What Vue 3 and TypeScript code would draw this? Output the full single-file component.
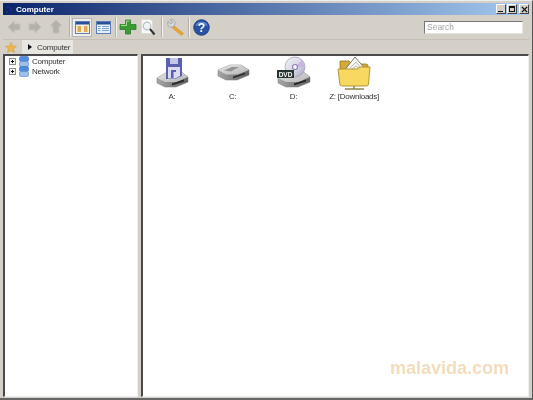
<template>
  <div class="window">
    <div class="titlebar">
      <svg class="title-icon" width="10" height="10" viewBox="0 0 10 10">
        <path d="M2 2h2v2H2zM5 5h2v2H5zM1 7h2v2H1z" fill="#1d2f7a" />
      </svg>
      <span class="title-text">Computer</span>
      <div class="caption-buttons">
        <button class="caption-btn"><span class="min-glyph"></span></button>
        <button class="caption-btn"><span class="max-glyph"></span></button>
        <button class="caption-btn close-btn">
          <svg width="7" height="7" viewBox="0 0 8 8">
            <path d="M1 1l6 6M7 1L1 7" stroke="#111" stroke-width="1.6" />
          </svg>
        </button>
      </div>
    </div>

    <div class="toolbar">
      <div class="tool-group">
        <div v-for="d in navArrows" :key="d" class="slot">
          <svg width="16" height="16" viewBox="0 0 16 16">
            <path :d="d" fill="#b3b1a9" stroke="#c2c0b8" stroke-width="1" />
          </svg>
        </div>
      </div>
      <div class="sep"></div>
      <div class="tool-group views">
        <div class="view-btn active">
          <svg width="15" height="13" viewBox="0 0 15 13">
            <rect x=".5" y=".5" width="14" height="12" fill="#f6f1df" stroke="#5d7fb8" />
            <rect x="1" y="1" width="13" height="2.500" fill="#274f9a" />
            <rect x="2.500" y="5" width="3.500" height="6" fill="#e2a94e" />
            <rect x="9" y="5" width="3.500" height="6" fill="#e2a94e" />
          </svg>
        </div>
        <div class="view-btn">
          <svg width="15" height="13" viewBox="0 0 15 13">
            <rect x=".5" y=".5" width="14" height="12" fill="#e6eff9" stroke="#5d7fb8" />
            <rect x="1" y="1" width="13" height="2.500" fill="#274f9a" />
            <path d="M2 5.500h2.500M2 7.500h2.500M2 9.500h2.500M6 5.500h7M6 7.500h7M6 9.500h7" stroke="#7ea0d2" />
          </svg>
        </div>
      </div>
      <div class="sep"></div>
      <div class="tool-group">
        <div class="slot slot-narrow">
          <svg width="18" height="16" viewBox="0 0 18 16">
            <path d="M6.500 1h5v4.500H17v5h-5.500V15h-5v-4.500H1v-5h5.500z" fill="#3b9a34" stroke="#27802a" stroke-width=".8" />
            <path d="M2 6.500h5.500V2h3" stroke="#a3e08e" fill="none" />
          </svg>
        </div>
        <div class="slot slot-narrow">
          <svg width="16" height="17" viewBox="0 0 16 17">
            <path d="M1.500.5h9l2 2v12h-11z" fill="#f8f8f6" stroke="#dcdcd6" />
            <circle cx="7" cy="7" r="3.800" fill="#f0f4f5" stroke="#b8bfc3" stroke-width="1.200" />
            <path d="M10 10l4.500 5.500" stroke="#2e2e2e" stroke-width="2" />
          </svg>
        </div>
      </div>
      <div class="sep"></div>
      <div class="tool-group">
        <div class="slot">
          <svg class="wrench" width="18" height="17" viewBox="0 0 18 17">
            <path d="M6.500 6.500l10 8-2 2-9.500-8z" fill="#efa52f" stroke="#c48a2a" stroke-width=".6" />
            <path d="M1 2.500l3 2.500 2-2L3 .8C5.500-.5 8.500 1 8 4.500c0 1-.5 2-1 3-1.500 1-4 1-5.500-.5C.5 5.500.5 4 1 2.500z" fill="#d5d7da" stroke="#8d9197" stroke-width=".6" />
          </svg>
        </div>
      </div>
      <div class="sep"></div>
      <div class="tool-group">
        <div class="slot slot-narrow">
          <svg width="17" height="17" viewBox="0 0 18 18">
            <circle cx="9" cy="9" r="8.200" fill="#2a52a3" stroke="#1d3b80" />
            <path d="M2.500 7.500a6.600 5.500 0 0 1 13 0c-4-1.500-9-1.500-13 0z" fill="#5f86cf" />
            <text x="9" y="13.500" text-anchor="middle" class="help-mark">?</text>
          </svg>
        </div>
      </div>
      <div class="search-box">Search</div>
    </div>

    <div class="tabbar">
      <div class="fav-tab">
        <svg width="12" height="11" viewBox="0 0 15 14">
          <path d="M7.500.5l2 4.500 5 .5-3.700 3.200 1.100 4.800-4.400-2.500-4.400 2.500 1.100-4.800L.5 5.500l5-.5z" fill="#eeb64c" stroke="#c99a3d" stroke-width=".6" />
        </svg>
      </div>
      <div class="path-tab">
        <span class="crumb-arrow"></span>
        <span>Computer</span>
      </div>
    </div>

    <div class="panes">
      <div class="tree pane">
        <div v-for="node in treeNodes" :key="node" class="tree-row">
          <svg class="expander" width="7" height="7" viewBox="0 0 7 7">
            <rect x=".5" y=".5" width="6" height="6" fill="#f3f3f0" stroke="#8d8d8d" />
            <path d="M2 3.500h3M3.500 2v3" stroke="#111" />
          </svg>
          <svg width="12" height="11" viewBox="0 0 12 11">
            <rect x="1.500" y="0.500" width="9" height="5" rx="1.500" fill="#4f8ce0" stroke="#3b6fbe" stroke-width=".6" />
            <rect x="1.500" y="5.500" width="9" height="5" rx="1.500" fill="#9dbfe9" stroke="#5f8bcc" stroke-width=".6" />
          </svg>
          <span class="tree-label">{{ node }}</span>
        </div>
      </div>
      <div class="files pane">
        <div class="file-item">
          <svg width="46" height="36" viewBox="0 0 46 36">
            <defs>
              <linearGradient id="driveTop" x1="0" y1="0" x2="1" y2="1">
                <stop offset="0" stop-color="#e6e6e6" />
                <stop offset="1" stop-color="#b4b4b4" />
              </linearGradient>
              <linearGradient id="driveFront" x1="0" y1="0" x2="1" y2="0">
                <stop offset="0" stop-color="#a6a6a6" />
                <stop offset="1" stop-color="#5f5f5f" />
              </linearGradient>
              <linearGradient id="disc" x1="0" y1="0" x2="1" y2="1">
                <stop offset="0" stop-color="#f4f4f8" />
                <stop offset=".6" stop-color="#d3d3e4" />
                <stop offset="1" stop-color="#9d9db4" />
              </linearGradient>
            </defs>
            <path d="M8 22L20 15H31L39 21V26L27 31H16L8 27Z" fill="url(#driveFront)" stroke="#777" stroke-width=".5" />
            <path d="M8 22L20 15H31L39 21L28 26H16Z" fill="url(#driveTop)" />
            <path d="M23 27.500L35 23.500V25.500L23 29.500Z" fill="#262626" />
            <path d="M17 2H33V20L26 23H17Z" fill="#5a5fae" />
            <rect x="21" y="2" width="8" height="6" fill="#c5c7e6" />
            <path d="M19 11H31V20L26 22.500H19Z" fill="#dcdcf0" />
            <path d="M22 14H27V16H24.500V22H22Z" fill="#5a5fae" />
          </svg>
          <span>A:</span>
        </div>
        <div class="file-item">
          <svg width="46" height="36" viewBox="0 0 46 36">
            <path d="M8 14L20 9H31L39 14V19L27 24H16L8 20Z" fill="url(#driveFront)" stroke="#777" stroke-width=".5" />
            <path d="M8 14L20 9H31L39 14L28 18.500H16Z" fill="url(#driveTop)" />
            <path d="M14 14.500L22 11H29L21 15.500Z" fill="#939393" />
            <path d="M23 20.500L35 16.500V18.500L23 22.500Z" fill="#333" />
          </svg>
          <span>C:</span>
        </div>
        <div class="file-item">
          <svg width="46" height="36" viewBox="0 0 46 36">
            <path d="M8 22L20 15H32L40 21V26L28 31H16L8 27Z" fill="url(#driveFront)" stroke="#777" stroke-width=".5" />
            <path d="M8 22L20 15H32L40 21L29 26H16Z" fill="url(#driveTop)" />
            <path d="M24 27.500L36 23.500V25.500L24 29.500Z" fill="#262626" />
            <circle cx="25" cy="11" r="10" fill="url(#disc)" stroke="#9e9eb3" stroke-width=".7" />
            <path d="M25 11L32 4A10 10 0 0 1 35 11Z" fill="#c7b6e0" />
            <circle cx="25" cy="11" r="2.500" fill="#f7f7f7" stroke="#8f82b8" stroke-width="1.200" />
            <rect x="7" y="14" width="17" height="8" fill="#27332d" />
            <text x="15.500" y="20.800" text-anchor="middle" class="dvd-mark">DVD</text>
          </svg>
          <span>D:</span>
        </div>
        <div class="file-item">
          <svg width="46" height="36" viewBox="0 0 46 36">
            <path d="M9 5h9l3 3h14q2 0 2 2v10H9z" fill="#d2aa35" stroke="#8f7a2a" stroke-width=".8" />
            <path d="M13 15L24 1l12 14v7H13z" fill="#f8f8f3" stroke="#6e6e68" stroke-width=".9" />
            <path d="M19 12l6-6 6 7M17 16l8-6 7 6" fill="none" stroke="#a8a8a0" stroke-width=".8" />
            <path d="M7 13h19l3-2h10l-1.500 17q-.2 2-2 2H11q-2 0-2.200-2z" fill="#f8d860" stroke="#a88c30" stroke-width=".9" />
            <path d="M23 30v2.500M14 33h19" stroke="#8f8650" stroke-width="1.500" />
          </svg>
          <span>Z: [Downloads]</span>
        </div>
        <div class="watermark">malavida.com</div>
      </div>
    </div>
  </div>
</template>

<script setup lang="ts">
const navArrows: string[] = [
  'M2 8l6-6v3h6v6H8v3z',
  'M14 8L8 2v3H2v6h6v3z',
  'M8 1l6 6h-3v7H5V7H2z',
]
const treeNodes: string[] = ['Computer', 'Network']
</script>

<style>
html,
body {
  margin: 0;
  overflow: hidden;
}
</style>

<style scoped>
.window {
  width: 533px;
  height: 400px;
  box-sizing: border-box;
  padding: 2px 3px 1px 3px;
  background: #d4d0c8;
  display: flex;
  flex-direction: column;
  font-family: "Liberation Sans", Arial, sans-serif;
  font-size: 8px;
  letter-spacing: -0.25px;
  color: #333;
  border-top: 1px solid #eee;
  border-right: 1px solid #555;
  border-bottom: 2px solid #666;
  overflow: hidden;
  filter: blur(0.3px);
}

.titlebar {
  height: 12px;
  flex: none;
  display: flex;
  align-items: center;
  padding-left: 2px;
  background: linear-gradient(90deg, #0a246a, #a6caf0);
}

.title-icon {
  margin-right: 1px;
}

.title-text {
  color: #fff;
  font-weight: bold;
  font-size: 8px;
  letter-spacing: 0;
}

.caption-buttons {
  margin-left: auto;
  display: flex;
}

.caption-btn {
  width: 10px;
  height: 10px;
  padding: 0;
  margin-left: 1px;
  background: #d4d0c8;
  border: 1px solid;
  border-color: #fff #444 #444 #fff;
  display: flex;
  align-items: center;
  justify-content: center;
}

.close-btn {
  margin-left: 2px;
}

.min-glyph {
  width: 5px;
  height: 1px;
  background: #111;
  margin-top: 5px;
  margin-right: 1px;
}

.max-glyph {
  width: 6px;
  height: 6px;
  box-sizing: border-box;
  border: 1px solid #111;
  border-top-width: 2px;
}

.toolbar {
  height: 25px;
  flex: none;
  display: flex;
  align-items: center;
  border-bottom: 1px solid #c4c0b7;
  box-sizing: border-box;
}

.tool-group {
  display: flex;
  align-items: center;
}

.slot {
  width: 21px;
  display: flex;
  justify-content: center;
}

.slot-narrow {
  width: 20px;
}

.wrench {
  margin-left: 3px;
}

.sep {
  width: 1px;
  height: 20px;
  margin: 0 1px 0 3px;
  background: #b3afa6;
  border-right: 1px solid #f4f3ef;
}

.views {
  gap: 2px;
}

.view-btn {
  width: 18px;
  height: 19px;
  display: flex;
  align-items: center;
  justify-content: center;
  box-sizing: border-box;
}

.view-btn.active {
  width: 20px;
  background: #f1eee8;
  border: 1px solid #b4b6be;
}

.search-box {
  margin-left: auto;
  margin-right: 6px;
  width: 99px;
  height: 13px;
  box-sizing: border-box;
  background: #fff;
  border: 1px solid;
  border-color: #777 #e6e4de #e6e4de #777;
  color: #a2a2a2;
  font-size: 8.5px;
  letter-spacing: 0;
  line-height: 11px;
  padding-left: 2px;
}

.tabbar {
  height: 14px;
  flex: none;
  display: flex;
  align-items: flex-end;
}

.fav-tab {
  width: 16px;
  height: 14px;
  display: flex;
  align-items: center;
  justify-content: center;
}

.path-tab {
  width: 51px;
  height: 14px;
  box-sizing: border-box;
  margin-left: 3px;
  display: flex;
  align-items: center;
  gap: 5px;
  padding-left: 6px;
  background: #e8e6e0;
  color: #333;
}

.crumb-arrow {
  width: 0;
  height: 0;
  border-left: 4px solid #111;
  border-top: 3px solid transparent;
  border-bottom: 3px solid transparent;
}

.panes {
  flex: 1;
  display: flex;
  gap: 3px;
  min-height: 0;
}

.pane {
  background: #fff;
  border-top: 2px solid #4a4a4a;
  border-left: 2px solid #4a4a4a;
  border-right: 1px solid #eee;
  border-bottom: 1px solid #eee;
  box-sizing: border-box;
}

.tree {
  width: 135px;
  flex: none;
  padding-left: 3.5px;
}

.tree-row {
  height: 10.5px;
  display: flex;
  align-items: center;
}

.expander {
  margin-right: 2.5px;
}

.tree-label {
  margin-left: 2px;
}

.files {
  flex: 1;
  display: flex;
  align-items: flex-start;
  gap: 14.7px;
  padding-left: 6px;
  position: relative;
}

.file-item {
  width: 46px;
  display: flex;
  flex-direction: column;
  align-items: center;
  line-height: 9px;
  white-space: nowrap;
}

.watermark {
  position: absolute;
  right: 19px;
  bottom: 17px;
  color: #f2dcbb;
  font-weight: bold;
  font-size: 18px;
  letter-spacing: 0;
}

.help-mark {
  fill: #fff;
  font-size: 13px;
  font-weight: bold;
  font-family: "Liberation Sans", sans-serif;
}

.dvd-mark {
  fill: #fff;
  font-size: 6.5px;
  font-weight: bold;
  letter-spacing: 0;
  font-family: "Liberation Sans", sans-serif;
}
</style>
